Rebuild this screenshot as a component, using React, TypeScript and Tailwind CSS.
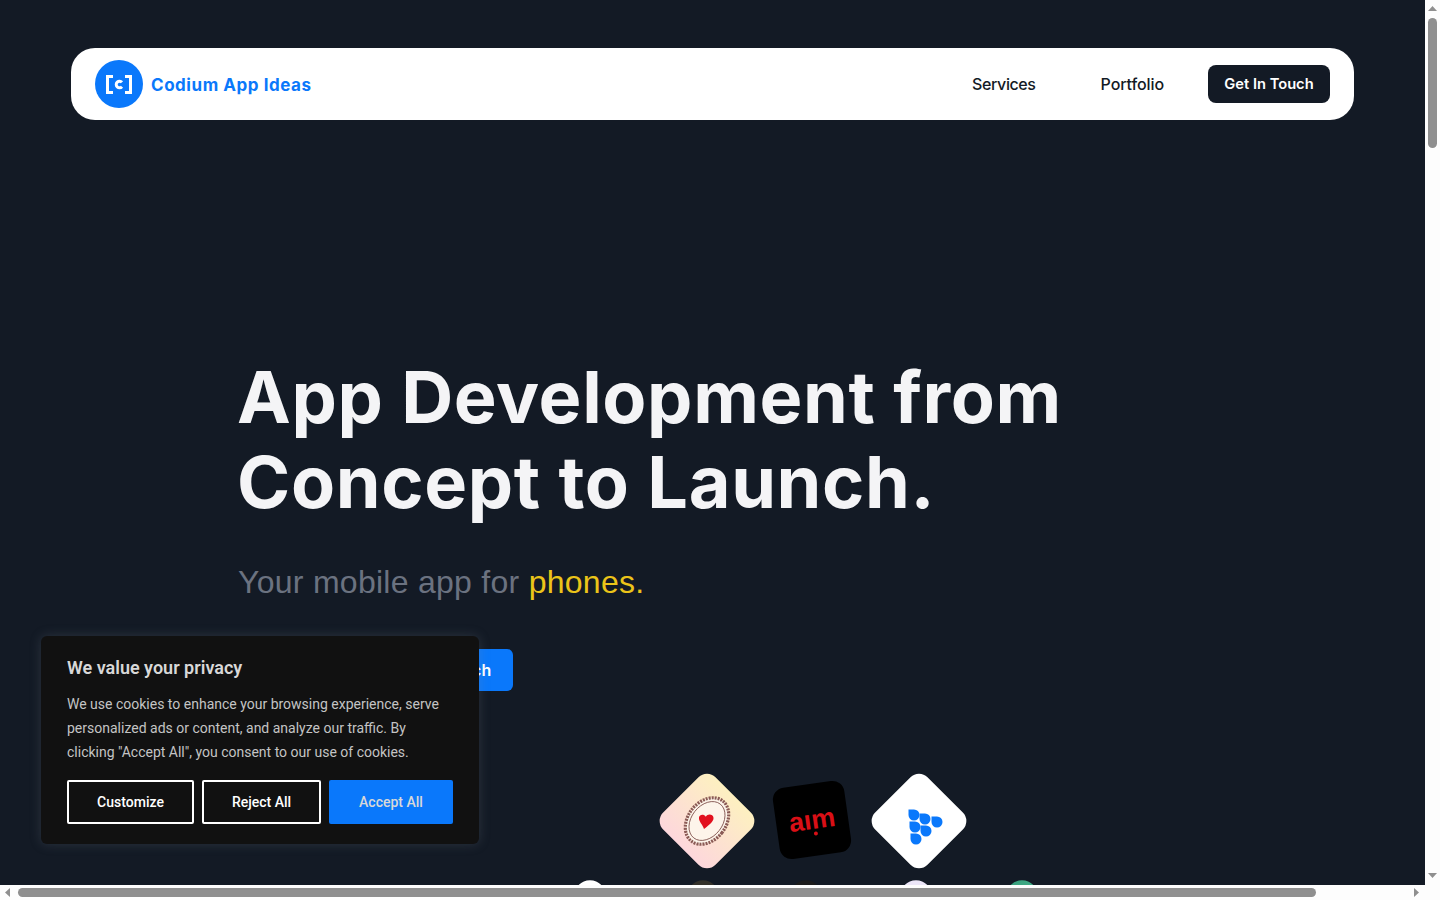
const inter = { fontFamily: '"Inter", "Liberation Sans", sans-serif' };
const liberation = { fontFamily: '"Liberation Sans", Arial, sans-serif' };

function Logo() {
  return (
    <svg width="48" height="48" viewBox="0 0 48 48" className="shrink-0">
      <circle cx="24" cy="24" r="24" fill="#0a78fb" />
      <path d="M18 16.500h-5.500v16h5.500M30 16.500h5.500v16h-5.500" fill="none" stroke="#fff" strokeWidth="3" />
      <path d="M27 22.300a3.300 3.300 0 1 0 0 4.400" fill="none" stroke="#fff" strokeWidth="3" />
    </svg>
  );
}

function HeartIcon() {
  return (
    <svg width="66" height="66" viewBox="0 0 66 66" className="-rotate-45">
      <g transform="rotate(38 33 33)">
        <ellipse cx="33" cy="33" rx="19" ry="25.500" fill="#fdf4ea" stroke="#8a5a55" strokeWidth="3.200" strokeDasharray="2 1" />
        <ellipse cx="33" cy="33" rx="15.500" ry="21.500" fill="#fdf4ea" stroke="#7a4a46" strokeWidth="0.800" />
      </g>
      <path d="M30 41c-1.500-5-5.500-7.500-5-11.500.5-3.300 4.800-3.800 6.800-.8 1.700-3.200 7.200-2.800 7.700 1 .5 3.800-5 7.500-9.500 11.300z" fill="#e2101e" />
    </svg>
  );
}

function Drops() {
  const drops = [[28, 27], [39, 31], [51, 34], [29, 39], [40, 43], [30, 51]];
  return (
    <svg width="66" height="66" viewBox="0 0 66 66" className="-rotate-45">
      {drops.map(([x, y]) => (
        <path key={`${x}-${y}`} d={`M${x - 5.500} ${y - 5.500}h5.500a5.500 5.500 0 1 1-5.500 5.500z`} fill="#0a78fb" />
      ))}
    </svg>
  );
}

function Peek({ className }: { className: string }) {
  return <div className={`h-[74px] w-[74px] shrink-0 rotate-45 rounded-[16px] ${className}`} />;
}

function Triangle({ points, w, h }: { points: string; w: number; h: number }) {
  return (
    <svg width={w} height={h} viewBox={`0 0 ${w} ${h}`} className="shrink-0">
      <polygon points={points} fill="#8f8f8f" />
    </svg>
  );
}

export default function App() {
  return (
    <div className="flex h-screen w-screen flex-col overflow-hidden bg-[#fdfdfd]" style={inter}>
      <div className="flex min-h-0 flex-1">
        <div className="relative min-w-0 flex-1 overflow-hidden bg-[#131a25] pt-12">
          <header className="mx-[71px] flex h-[72px] items-center justify-between rounded-[24px] bg-white px-6">
            <div className="flex items-center gap-2">
              <Logo />
              <span className="pt-[4px] text-[17px] font-bold tracking-[0.55px] text-[#0a78fb]">Codium App Ideas</span>
            </div>
            <nav className="flex items-center text-[16px] font-medium text-[#131a25]">
              <a className="mr-[65px] tracking-[-0.4px]">Services</a>
              <a className="mr-11 tracking-[-0.1px]">Portfolio</a>
              <button className="h-[38px] w-[122px] rounded-lg bg-[#131a25] text-[14.700px] font-semibold text-white">Get In Touch</button>
            </nav>
          </header>

          <main className="pl-[237px] pt-[234px]">
            <h1 className="text-[72px] font-bold leading-[85px] tracking-[0.65px] text-[#f4f4f6]">
              App Development from
              <br />
              Concept to Launch.
            </h1>
            <p className="ml-px mt-[34px] text-[32px] leading-[48px] tracking-[0.27px] text-[#6b7280]" style={liberation}>
              Your mobile app for <span className="text-[#ecc419]">phones.</span>
            </p>
            <div className="mt-[43px] flex">
              <button className="ml-[135px] h-[42px] w-[141px] rounded-md bg-[#0a78fb] text-[16px] font-semibold text-white">Get In Touch</button>
            </div>

            <div className="ml-[433px] mt-[93px] flex">
              <div className="flex h-[74px] w-[74px] shrink-0 rotate-45 items-center justify-center rounded-[12px] bg-linear-to-t from-[#fdd7dc] to-[#fdf0c0]">
                <HeartIcon />
              </div>
              <div className="ml-[32px] flex h-[72px] w-[72px] shrink-0 -rotate-[8deg] items-center justify-center rounded-[12px] bg-black">
                <span className="relative text-[27px] font-bold leading-none text-[#d90f16]" style={liberation}>
                  aım
                  <span className="absolute left-[23px] top-[25px] h-1 w-1 rounded-full bg-[#d90f16]" />
                </span>
              </div>
              <div className="ml-[34px] flex h-[74px] w-[74px] shrink-0 rotate-45 items-center justify-center rounded-[12px] bg-white">
                <Drops />
              </div>
            </div>

            <div className="ml-[316px] mt-[31px] flex">
              <Peek className="bg-white" />
              <Peek className="ml-[39px] bg-[#33312a]" />
              <Peek className="ml-[29px] bg-[#1c1c1c]" />
              <Peek className="ml-[36px] bg-[#ece6f8]" />
              <Peek className="ml-[32px] bg-linear-to-r from-[#3aa17e] to-[#4fd0a0]" />
            </div>
          </main>

          <aside
            className="absolute bottom-[41px] left-[41px] h-[208px] w-[438px] rounded-[6px] bg-[#111111] px-[26px] pt-[20px] shadow-[0_0_12px_rgba(120,130,145,0.25)]"
            style={{ fontFamily: 'Roboto, "Liberation Sans", sans-serif' }}
          >
            <h2 className="text-[18px] font-semibold leading-[24px] text-[#d8d8d8]">We value your privacy</h2>
            <p className="mt-[12px] w-[380px] text-[14px] leading-[24px] text-[#c4c4c4]">
              We use cookies to enhance your browsing experience, serve personalized ads or content, and analyze our traffic. By clicking "Accept All", you consent to our use of cookies.
            </p>
            <div className="mt-[16px] flex gap-2 text-[14px] font-medium">
              <button className="h-11 w-[127px] rounded-[2px] border-2 border-white text-white">Customize</button>
              <button className="h-11 w-[119px] rounded-[2px] border-2 border-white text-white">Reject All</button>
              <button className="h-11 w-[124px] rounded-[2px] bg-[#0a78fb] text-[#d8d8d8]">Accept All</button>
            </div>
          </aside>
        </div>

        <div className="flex w-[15px] shrink-0 flex-col items-center pb-[7px] pt-[6px]">
          <Triangle w={9} h={5} points="4.500,0 9,5 0,5" />
          <div className="mt-[7px] h-[130px] w-[9px] rounded-full bg-[#8f8f8f]" />
          <div className="mt-auto">
            <Triangle w={9} h={5} points="0,0 9,0 4.500,5" />
          </div>
        </div>
      </div>

      <div className="flex h-[15px] shrink-0 items-center pl-[5px]">
        <Triangle w={5} h={9} points="5,0 5,9 0,4.500" />
        <div className="ml-[8px] h-[9px] w-[1298px] rounded-full bg-[#8f8f8f]" />
        <div className="ml-auto mr-[21px]">
          <Triangle w={5} h={9} points="0,0 5,4.500 0,9" />
        </div>
      </div>
    </div>
  );
}
